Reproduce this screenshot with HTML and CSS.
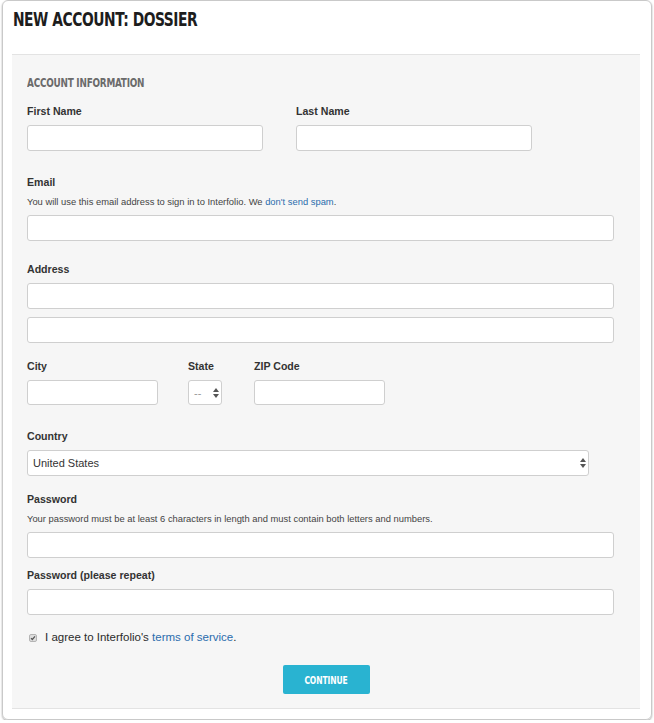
FILE: index.html
```html
<!DOCTYPE html>
<html>
<head>
    <title>New Account: Dossier</title>
    <link rel="stylesheet" href="styles.css">
</head>
<body>
    <div class="card">
        <header class="card-header">
            <h1 class="page-title">NEW ACCOUNT: DOSSIER</h1>
        </header>

        <div class="panel">
            <form class="form">
                <h2 class="section-title">ACCOUNT INFORMATION</h2>

                <div class="row">
                    <div class="field field-half">
                        <label>First Name</label>
                        <input class="input" type="text">
                    </div>
                    <div class="field field-half">
                        <label>Last Name</label>
                        <input class="input" type="text">
                    </div>
                </div>

                <div class="field field-email">
                    <label>Email</label>
                    <p class="hint">You will use this email address to sign in to Interfolio. We <a href="#">don't send spam</a>.</p>
                    <input class="input" type="email">
                </div>

                <div class="field field-address">
                    <label>Address</label>
                    <input class="input" type="text">
                    <input class="input input-next" type="text">
                </div>

                <div class="row row-city">
                    <div class="field field-city">
                        <label>City</label>
                        <input class="input" type="text">
                    </div>
                    <div class="field field-state">
                        <label>State</label>
                        <div class="select-wrap">
                            <select class="select select-state">
                                <option>--</option>
                            </select>
                            <svg class="select-arrows" width="6" height="10" viewBox="0 0 6 10">
                                <path d="M0 4L3 0L6 4Z M0 6L3 10L6 6Z" fill="#555"/>
                            </svg>
                        </div>
                    </div>
                    <div class="field field-zip">
                        <label>ZIP Code</label>
                        <input class="input" type="text">
                    </div>
                </div>

                <div class="field field-country">
                    <label>Country</label>
                    <div class="select-wrap">
                        <select class="select select-country">
                            <option>United States</option>
                        </select>
                        <svg class="select-arrows" width="6" height="10" viewBox="0 0 6 10">
                            <path d="M0 4L3 0L6 4Z M0 6L3 10L6 6Z" fill="#555"/>
                        </svg>
                    </div>
                </div>

                <div class="field field-password">
                    <label>Password</label>
                    <p class="hint">Your password must be at least 6 characters in length and must contain both letters and numbers.</p>
                    <input class="input" type="password">
                </div>

                <div class="field field-repeat">
                    <label>Password (please repeat)</label>
                    <input class="input" type="password">
                </div>

                <div class="agree">
                    <svg class="checkbox" width="8" height="8" viewBox="0 0 8 8">
                        <rect x="0.5" y="0.5" width="7" height="7" rx="1.5" fill="#dedede" stroke="#b4b4b4"/>
                        <path d="M2 4.2L3.3 5.5L6 2.4" fill="none" stroke="#555" stroke-width="1.2"/>
                    </svg>
                    <span>I agree to Interfolio's <a href="#">terms of service</a>.</span>
                </div>
            </form>

            <div class="actions">
                <button class="btn-continue" type="button"><span class="btn-label">CONTINUE</span></button>
            </div>
        </div>
    </div>
</body>
</html>
```

FILE: styles.css
```css
body {
    margin: 0;
    padding: 0 2px;
    background-color: #fff;
    font-family: "Liberation Sans", Arial, sans-serif;
    color: #333;
}

.card {
    width: 650px;
    box-sizing: border-box;
    border: 1px solid #c9c9c9;
    border-radius: 6px;
    box-shadow: 0 1px 2px rgba(0, 0, 0, 0.35);
    padding: 0 11px 10px 9px;
}

.card-header {
    padding: 7px 0 22px 1px;
}

/* narrow heading face: squeeze the condensed sans a little more */
.page-title,
.section-title,
.btn-label {
    font-family: "DejaVu Sans Condensed", "DejaVu Sans", sans-serif;
    font-stretch: condensed;
    font-weight: bold;
    transform-origin: left center;
}

.page-title {
    margin: 0;
    font-size: 19.5px;
    line-height: 24px;
    letter-spacing: -0.6px;
    color: #1d1d1d;
    transform: scaleX(0.79);
}

.panel {
    background-color: #f6f6f6;
    border-top: 1px solid #e3e3e3;
    border-bottom: 1px solid #e3e3e3;
    padding: 20px 0 14px;
}

.form {
    width: 587px;
    margin-left: 15px;
}

.section-title {
    margin: 0 0 13px;
    font-size: 12.5px;
    line-height: 16px;
    letter-spacing: -0.3px;
    color: #6b6b6b;
    transform: scaleX(0.79);
}

.row {
    display: flex;
    gap: 33px;
}

.field label {
    display: block;
    font-weight: bold;
    font-size: 10.6px;
    line-height: 15px;
    margin-bottom: 6px;
    color: #333;
}

.hint {
    margin: 0 0 7px;
    font-size: 9.4px;
    line-height: 12px;
    color: #444;
}

.hint a,
.agree a {
    color: #2a6cad;
    text-decoration: none;
}

.input,
.select {
    display: block;
    width: 100%;
    height: 26px;
    box-sizing: border-box;
    border: 1px solid #cfcfcf;
    border-radius: 3px;
    background-color: #fff;
    margin: 0;
    font-family: inherit;
}

.input-next {
    margin-top: 8px;
}

.field-half {
    width: 236px;
}

.field-email {
    margin-top: 24px;
}

.field-address {
    margin-top: 21px;
}

.row-city {
    margin-top: 16px;
    gap: 0;
}

.row-city .input,
.row-city .select {
    height: 25px;
}

.field-city {
    width: 131px;
    margin-right: 30px;
}

.field-state {
    width: 34px;
    margin-right: 32px;
}

.field-zip {
    width: 131px;
}

.field-country {
    margin-top: 24px;
    width: 562px;
}

.field-password {
    margin-top: 16px;
}

.field-repeat {
    margin-top: 10px;
}

.select-wrap {
    position: relative;
}

.select {
    appearance: none;
    -webkit-appearance: none;
    padding: 0 0 0 5px;
    font-size: 11px;
    color: #333;
}

.select-state {
    color: #999;
}

.select-arrows {
    position: absolute;
    right: 3px;
    top: 50%;
    margin-top: -5px;
}

.agree {
    margin-top: 15px;
    display: flex;
    align-items: center;
    gap: 8px;
    padding-left: 2px;
    font-size: 11.5px;
    line-height: 15px;
    color: #2b2b2b;
}

.checkbox {
    margin-top: 1px;
}

.actions {
    margin-top: 20px;
    text-align: center;
}

.btn-continue {
    width: 87px;
    height: 29px;
    padding: 0;
    border: none;
    border-radius: 2px;
    background-color: #29b3d1;
    color: #fff;
    cursor: pointer;
}

.btn-label {
    display: inline-block;
    font-size: 10.5px;
    letter-spacing: -0.1px;
    transform: scaleX(0.8);
    transform-origin: center;
}
```
